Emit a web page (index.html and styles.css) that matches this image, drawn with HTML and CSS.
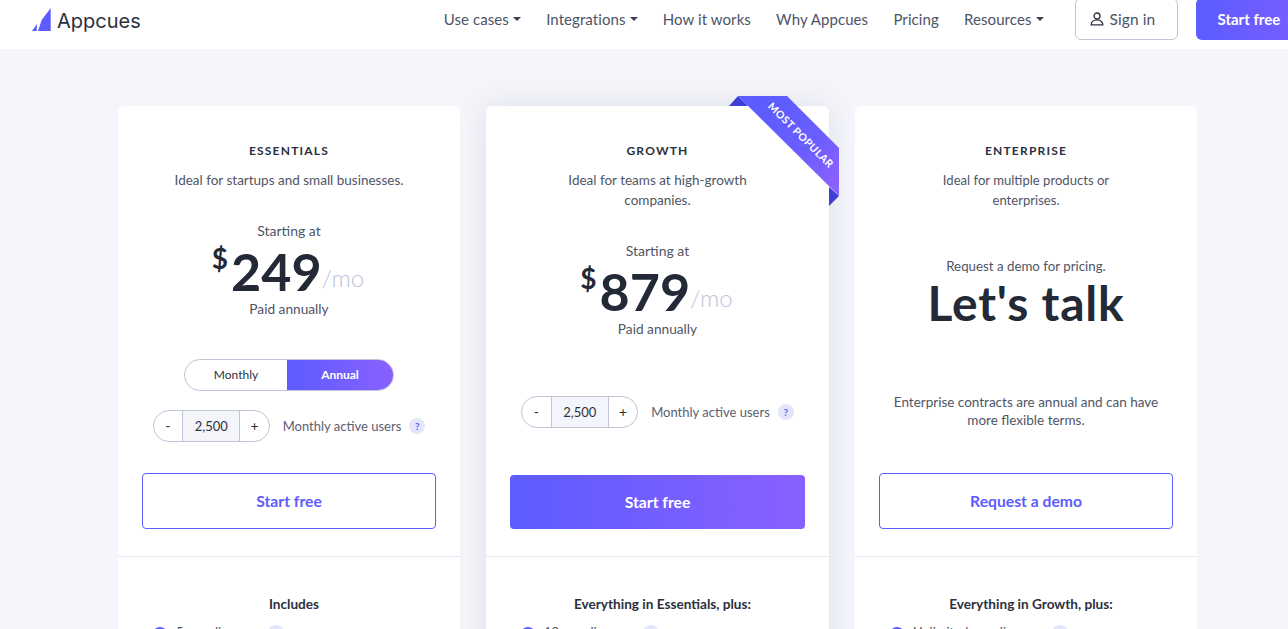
FILE: index.html
```html
<!DOCTYPE html>
<html lang="en">
<head>
<meta charset="utf-8">
<title>Appcues Pricing</title>
<link rel="stylesheet" href="styles.css">
</head>
<body>
<header class="nav">
  <a class="logo">
    <svg class="logo-mark" viewBox="0 0 19 23" width="19" height="23"><path fill="#5c5cff" d="M18.700 0V23H6L9.700 12z"/><path fill="#5c5cff" d="M0 23H4.700L5 16z"/></svg>
    <span class="logo-text">Appcues</span>
  </a>
  <nav class="menu">
    <a class="menu-item">Use cases<i class="caret"></i></a>
    <a class="menu-item">Integrations<i class="caret"></i></a>
    <a class="menu-item">How it works</a>
    <a class="menu-item">Why Appcues</a>
    <a class="menu-item">Pricing</a>
    <a class="menu-item">Resources<i class="caret"></i></a>
  </nav>
  <a class="signin">
    <svg viewBox="0 0 14 14" width="14" height="14" fill="none" stroke="#2b3040" stroke-width="1.300"><circle cx="7" cy="4" r="3"/><path d="M1.200 12.800c0-3 2.400-5 5.800-5s5.800 2 5.800 5z"/></svg>
    Sign in
  </a>
  <a class="nav-cta">Start free</a>
</header>
<main class="plans">
  <article class="card side">
    <div class="card-top">
      <h2 class="plan">ESSENTIALS</h2>
      <p class="desc">Ideal for startups and small businesses.</p>
      <p class="starting">Starting at</p>
      <div class="price"><sup>$</sup><b>249</b><span>/mo</span></div>
      <p class="paid">Paid annually</p>
      <div class="toggle"><span class="opt">Monthly</span><span class="opt on">Annual</span></div>
      <div class="users">
        <div class="stepper"><span class="st-btn">-</span><span class="st-val">2,500</span><span class="st-btn">+</span></div>
        <span class="users-label">Monthly active users</span><span class="q">?</span>
      </div>
      <a class="btn">Start free</a>
    </div>
    <div class="card-bottom">
      <h3 class="inc">Includes</h3>
      <div class="feature"><i class="dot"></i><span>5 core licenses</span><i class="q q-faint"></i></div>
    </div>
  </article>
  <article class="card featured">
    <div class="ribbon">
      <svg viewBox="0 0 111 110" width="111" height="110">
        <defs><linearGradient id="rb" gradientUnits="userSpaceOnUse" x1="30" y1="10" x2="105" y2="85"><stop offset="0" stop-color="#5c5cff"/><stop offset=".6" stop-color="#6a5eff"/><stop offset="1" stop-color="#8a60ff"/></linearGradient></defs>
        <path fill="#3e3ed6" d="M9 0L0 10H19z"/>
        <path fill="#3e3ed6" d="M100 91L110 100L100 110z"/>
        <path fill="url(#rb)" d="M9 0H58L110 52V100z"/>
      </svg>
      <span>MOST POPULAR</span>
    </div>
    <div class="card-top">
      <h2 class="plan">GROWTH</h2>
      <p class="desc">Ideal for teams at high-growth<br>companies.</p>
      <p class="starting">Starting at</p>
      <div class="price"><sup>$</sup><b>879</b><span>/mo</span></div>
      <p class="paid">Paid annually</p>
      <div class="users users-solo">
        <div class="stepper"><span class="st-btn">-</span><span class="st-val">2,500</span><span class="st-btn">+</span></div>
        <span class="users-label">Monthly active users</span><span class="q">?</span>
      </div>
      <a class="btn btn-fill">Start free</a>
    </div>
    <div class="card-bottom">
      <h3 class="inc">Everything in Essentials, plus:</h3>
      <div class="feature"><i class="dot"></i><span>10 core licenses</span><i class="q q-faint"></i></div>
    </div>
  </article>
  <article class="card side">
    <div class="card-top">
      <h2 class="plan">ENTERPRISE</h2>
      <p class="desc desc-tight">Ideal for multiple products or<br>enterprises.</p>
      <p class="request">Request a demo for pricing.</p>
      <div class="talk">Let's talk</div>
      <p class="terms">Enterprise contracts are annual and can have<br>more flexible terms.</p>
      <a class="btn">Request a demo</a>
    </div>
    <div class="card-bottom">
      <h3 class="inc">Everything in Growth, plus:</h3>
      <div class="feature"><i class="dot"></i><span>Unlimited core licenses</span><i class="q q-faint"></i></div>
    </div>
  </article>
</main>
</body>
</html>
```
FILE: styles.css
```css
* { box-sizing: border-box; }
html, body { margin: 0; height: 100%; overflow: hidden; }
body { background: #f5f6fb; font-family: Lato, "Noto Sans", sans-serif; color: #4a4f60; font-size: 13px; }
p, h2, h3 { margin: 0; font-weight: 400; }

.nav { height: 49px; background: #fff; display: flex; align-items: flex-start; white-space: nowrap; overflow: hidden; }
.logo { display: flex; align-items: center; margin: 8px 0 0 32px; height: 23px; }
.logo-text { font-family: Inter, sans-serif; font-size: 20px; color: #2b3040; margin-left: 6px; font-weight: 400; position: relative; top: 1px; }
.menu { display: flex; gap: 25.200px; margin: 10px 0 0 303px; font-size: 15px; letter-spacing: .08px; color: #4c5468; line-height: 18px; }
.menu-item { display: flex; align-items: center; }
.caret { width: 0; height: 0; margin-left: 4px; border: 4px solid transparent; border-top: 4px solid #3a4052; border-bottom: 0; }
.signin { flex: none; display: flex; align-items: center; gap: 6px; margin: -2px 0 0 31px; height: 42px; width: 103px; padding-left: 14px; border: 1px solid #bfc5d6; border-radius: 6px; font-size: 15.500px; letter-spacing: .1px; color: #4c5468; }
.nav-cta { flex: none; margin: -2px 0 0 18px; height: 42px; width: 110px; padding-left: 22px; line-height: 42px; border-radius: 6px 0 0 6px; background: linear-gradient(90deg, #5c5cff, #7a5eff); color: #fff; font-size: 15px; font-weight: 700; }

.plans { display: grid; grid-template-columns: 342px 343px 342px; gap: 26px; padding: 57px 0 0 118px; }
.card { position: relative; height: 800px; background: #fff; border-radius: 6px; }
.side { z-index: 1; }
.featured { box-shadow: 0 0 32px rgba(80, 90, 125, .14); }
.card-top { height: 451px; padding: 38px 24px 27px; border-bottom: 1px solid #e3e6ee; display: flex; flex-direction: column; align-items: center; text-align: center; }
.plan { font-size: 12px; line-height: 14px; font-weight: 700; letter-spacing: 1.200px; color: #2b3040; }
.desc { margin-top: 12px; line-height: 20px; font-size: 13.500px; color: #4f5566; }
.desc-tight { font-size: 13.100px; }
.starting { margin-top: 31px; line-height: 20px; font-size: 14px; color: #4f5566; }
.price { display: flex; align-items: flex-start; height: 56px; margin-top: -2px; color: #232936; }
.price sup { font-size: 28px; font-weight: 700; line-height: 30px; margin-top: 4px; }
.price b { font-size: 52px; line-height: 64px; font-weight: 700; margin-left: 3px; }
.price span { font-size: 24px; line-height: 30px; margin: 24px 2px 0 0; font-weight: 300; color: #bcc4da; }
.paid { margin-top: 5px; line-height: 18px; font-size: 13.700px; color: #4f5566; }

.toggle { display: flex; margin-top: 41px; width: 210px; height: 32px; border: 1px solid #bfc5d6; border-radius: 16px; overflow: hidden; font-size: 12px; line-height: 30px; color: #2b3040; }
.opt { width: 102px; flex: none; }
.opt.on { width: 106px; color: #fff; font-weight: 700; background: linear-gradient(90deg, #5c5cff, #8a60ff); }
.users { display: flex; align-items: center; margin-top: 19px; }
.users-solo { margin-top: 58px; }
.stepper { display: flex; height: 32px; width: 117px; margin-right: -1px; border: 1px solid #bfc5d6; border-radius: 16px; overflow: hidden; font-size: 13px; line-height: 30px; color: #2b3040; }
.st-btn { width: 28.500px; flex: none; font-size: 14px; }
.st-val { flex: 1; background: #f4f5fa; border-left: 1px solid #bfc5d6; border-right: 1px solid #bfc5d6; }
.users-label { margin-left: 14px; font-size: 13px; color: #5a6072; }
.q { display: inline-block; width: 16px; height: 16px; margin-left: 8px; border-radius: 50%; background: #e3e6fa; color: #5c5cff; font-size: 10px; font-weight: 700; line-height: 16px; }
.btn { margin-top: auto; width: 100%; height: 56px; line-height: 54px; flex: none; border: 1px solid #5c5cff; border-radius: 4px; color: #5c5cff; font-size: 15.700px; font-weight: 700; }
.btn-fill { height: 54px; border: 0; border-radius: 4px; color: #fff; background: linear-gradient(90deg, #5c5cff, #8a60ff); }

.request { margin-top: 46px; line-height: 20px; font-size: 13.300px; color: #4f5566; }
.talk { margin-top: 1px; font-size: 48px; line-height: 52px; letter-spacing: .8px; font-weight: 700; color: #232936; }
.terms { margin-top: 64px; line-height: 18px; font-size: 13.500px; color: #4f5566; }

.card-bottom { padding: 39px 24px 0 34px; text-align: center; }
.inc { font-size: 13.600px; line-height: 16px; font-weight: 700; color: #2b3040; }
.feature { display: flex; align-items: flex-start; margin-top: 14px; font-size: 13px; color: #4f5566; line-height: 13px; }
.dot { flex: none; width: 16px; height: 16px; margin-top: 1px; border-radius: 50%; background: #5c5cff; margin-right: 8px; }
.q-faint { flex: none; margin-left: 8px; margin-top: -1px; }

.ribbon { position: absolute; top: -10px; left: 243px; width: 111px; height: 110px; z-index: 2; }
.ribbon svg { display: block; }
.ribbon span { position: absolute; top: 32px; left: 12px; width: 120px; height: 14px; transform: rotate(45deg); color: #fff; font-size: 10.500px; font-weight: 700; letter-spacing: .5px; line-height: 14px; text-align: center; }
```
